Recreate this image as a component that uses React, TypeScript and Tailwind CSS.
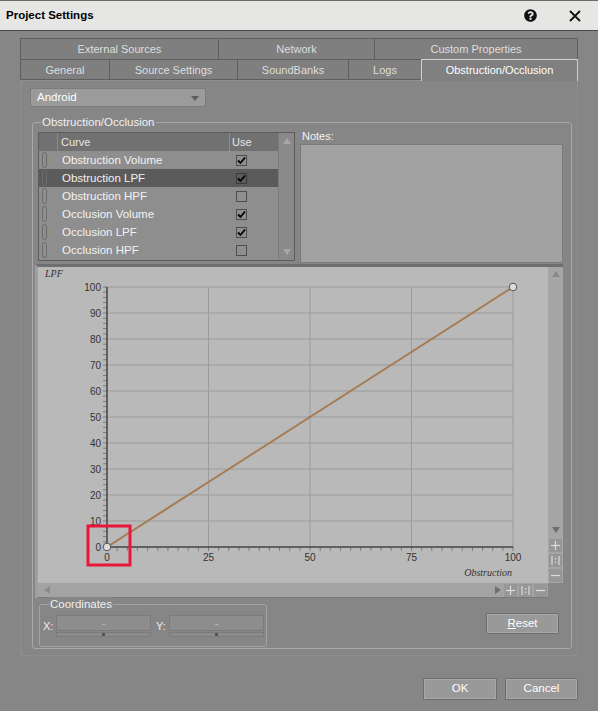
import clsx from "clsx";
import { FaQuestionCircle } from "react-icons/fa";

const tabsTop = [
  { label: "External Sources", w: "w-[198px]" },
  { label: "Network", w: "w-[156px]" },
  { label: "Custom Properties", w: "w-[204px]", last: true },
];

const tabsBottom = [
  { label: "General", w: "w-[89px]" },
  { label: "Source Settings", w: "w-[128px]" },
  { label: "SoundBanks", w: "w-[111px]" },
  { label: "Logs", w: "w-[73px]" },
  { label: "Obstruction/Occlusion", w: "w-[157px]", active: true, last: true },
];

const curves = [
  { name: "Obstruction Volume", use: true },
  { name: "Obstruction LPF", use: true, selected: true },
  { name: "Obstruction HPF", use: false },
  { name: "Occlusion Volume", use: true },
  { name: "Occlusion LPF", use: true },
  { name: "Occlusion HPF", use: false },
];

function Tri({ dir, className }: { dir: "up" | "down" | "left" | "right"; className?: string }) {
  const pts = {
    up: "0,7 4,1 8,7",
    down: "0,1 8,1 4,7",
    left: "7,0 7,8 1,4",
    right: "1,0 1,8 7,4",
  }[dir];
  return (
    <svg width="8" height="8" viewBox="0 0 8 8" className={className}>
      <polygon points={pts} fill="currentColor" />
    </svg>
  );
}

function MiniButton({ kind }: { kind: "plus" | "fit" | "minus" }) {
  return (
    <div className="w-[13px] h-[13px] bg-[#979797] flex items-center justify-center text-[#dcdcdc]">
      <svg width="9" height="9" viewBox="0 0 9 9" stroke="currentColor" strokeWidth="1.2">
        {kind === "plus" && (
          <>
            <line x1="0" y1="4.5" x2="9" y2="4.5" />
            <line x1="4.5" y1="0" x2="4.5" y2="9" />
          </>
        )}
        {kind === "minus" && <line x1="0" y1="4.5" x2="9" y2="4.5" />}
        {kind === "fit" && (
          <>
            <line x1="1" y1="0" x2="1" y2="9" />
            <line x1="8" y1="0" x2="8" y2="9" />
            <line x1="4.5" y1="2" x2="4.5" y2="3.5" />
            <line x1="4.5" y1="5.5" x2="4.5" y2="7" />
          </>
        )}
      </svg>
    </div>
  );
}

function CheckBox({ checked, dark }: { checked: boolean; dark?: boolean }) {
  return (
    <div
      className={clsx(
        "w-[11px] h-[11px] border flex items-center justify-center",
        dark ? "bg-[#5c5c5c] border-[#3a3a3a]" : "bg-[#8f8f8f] border-[#4e4e4e]"
      )}
    >
      {checked && (
        <svg width="9" height="9" viewBox="0 0 9 9">
          <path d="M1 4.5 L3.5 7 L8 1.5" fill="none" stroke="#000" strokeWidth="1.8" />
        </svg>
      )}
    </div>
  );
}

function DlgButton({ w, h, children }: { w: string; h: string; children: React.ReactNode }) {
  return (
    <div
      className={clsx(
        w,
        h,
        "bg-[#999999] border border-[#6c6c6c] shadow-[inset_0_0_0_1px_#a8a8a8] rounded-[1px] flex items-center justify-center text-white text-[11.5px]"
      )}
    >
      {children}
    </div>
  );
}

function TitleBar() {
  return (
    <div className="h-[31px] shrink-0 bg-[#e6e6e4] border-t border-t-[#6b6b6b] border-b border-b-[#4a4a4a] flex items-center pl-[6px] pr-[17px]">
      <span className="font-bold text-[11.5px] text-black">Project Settings</span>
      <div className="ml-auto flex items-center gap-[32px]">
        <FaQuestionCircle size={13} color="#111" />
        <svg width="12" height="12" viewBox="0 0 12 12">
          <path d="M1 1 L11 11 M11 1 L1 11" stroke="#111" strokeWidth="1.8" />
        </svg>
      </div>
    </div>
  );
}

function Tabs() {
  return (
    <div className="flex flex-col">
      <div className="flex">
        {tabsTop.map((t) => (
          <div
            key={t.label}
            className={clsx(
              t.w,
              "h-[21px] pt-px flex items-center justify-center bg-[#7f7f7f] text-[#dedede] border-t border-l border-[#5e5e5e]",
              t.last && "border-r"
            )}
          >
            {t.label}
          </div>
        ))}
      </div>
      <div className="flex items-start">
        {tabsBottom.map((t) =>
          t.active ? (
            <div
              key={t.label}
              className={clsx(
                t.w,
                "h-[22px] -mb-px relative z-10 flex items-center justify-center bg-[#808080] text-white border-t border-l border-r border-[#d0d0d0]"
              )}
            >
              {t.label}
            </div>
          ) : (
            <div
              key={t.label}
              className={clsx(
                t.w,
                "h-[21px] pt-px flex items-center justify-center bg-[#7f7f7f] text-[#dedede] border-t border-l border-b border-[#5e5e5e]"
              )}
            >
              {t.label}
            </div>
          )
        )}
      </div>
    </div>
  );
}

function CurveList() {
  return (
    <div className="w-[257px] h-[129px] border border-[#5d5d5d] flex bg-[#8e8e8e]">
      <div className="flex-1 flex flex-col">
        <div className="h-[18px] bg-[#717171] flex text-[#e6e6e6]">
          <div className="w-[19px] border-r border-[#8c8c8c]" />
          <div className="flex-1 pl-[3px] flex items-center border-r border-[#8c8c8c]">Curve</div>
          <div className="w-[48px] pl-[2px] flex items-center">Use</div>
        </div>
        {curves.map((c) => (
          <div key={c.name} className={clsx("h-[18px] flex items-center", c.selected && "bg-[#5b5b5b]")}>
            <div className="w-[19px] h-full flex items-center pl-[3px]">
              <div className="w-[5px] h-[16px] rounded-full border border-[#6c6c6c]" />
            </div>
            <div className="flex-1 pl-[4px] pt-px text-[#f2f2f2] text-[11.5px]">{c.name}</div>
            <div className="w-[48px] pl-[6px]">
              <CheckBox checked={c.use} dark={c.selected} />
            </div>
          </div>
        ))}
      </div>
      <div className="w-[16px] bg-[#8a8a8a] border-l border-[#7c7c7c] flex flex-col items-center justify-between py-[4px] text-[#a6a6a6]">
        <Tri dir="up" />
        <Tri dir="down" />
      </div>
    </div>
  );
}

function Plot() {
  const ox = 69;
  const oy = 280;
  const sx = 4.06;
  const sy = 2.6;
  const ys = Array.from({ length: 11 }, (_, i) => i * 10);
  const xs = [0, 25, 50, 75, 100];
  const yTicks = Array.from({ length: 51 }, (_, i) => i * 2);
  const xTicks = Array.from({ length: 41 }, (_, i) => i * 2.5);
  return (
    <svg width="510" height="316" viewBox="0 0 510 316" className="block">
      <rect width="510" height="316" fill="#b9b9b9" />
      <text x="7" y="10" fontSize="10" fontStyle="italic" fill="#333" fontFamily="Liberation Serif">
        LPF
      </text>
      {ys.slice(1).map((v) => (
        <line key={"h" + v} x1={ox} x2={ox + 100 * sx} y1={oy - v * sy} y2={oy - v * sy} stroke="#9b9b9b" />
      ))}
      {xs.slice(1).map((v) => (
        <line key={"v" + v} x1={ox + v * sx} x2={ox + v * sx} y1={oy - 100 * sy} y2={oy} stroke="#9b9b9b" />
      ))}
      {yTicks.map((v) => (
        <line key={"yt" + v} x1={ox - 4} x2={ox} y1={oy - v * sy} y2={oy - v * sy} stroke="#7a7a7a" />
      ))}
      {xTicks.map((v) => (
        <line key={"xt" + v} x1={ox + v * sx} x2={ox + v * sx} y1={oy} y2={oy + 4} stroke="#7a7a7a" />
      ))}
      {ys.map((v) => (
        <text key={"yl" + v} x={ox - 6} y={oy - v * sy + 3.5} fontSize="10" textAnchor="end" fill="#333">
          {v}
        </text>
      ))}
      {xs.map((v) => (
        <text key={"xl" + v} x={ox + v * sx} y={oy + 14} fontSize="10" textAnchor="middle" fill="#333">
          {v}
        </text>
      ))}
      <line x1={ox} x2={ox} y1={oy - 100 * sy} y2={oy} stroke="#454545" strokeWidth="1.5" />
      <line x1={ox} x2={ox + 100 * sx} y1={oy} y2={oy} stroke="#454545" strokeWidth="1.5" />
      <line x1={ox} y1={oy} x2={ox + 100 * sx} y2={oy - 100 * sy} stroke="#a67b52" strokeWidth="2" />
      <circle cx={ox} cy={oy} r="3.8" fill="#dcdcdc" stroke="#555" />
      <circle cx={ox + 100 * sx} cy={oy - 100 * sy} r="3.8" fill="#dcdcdc" stroke="#555" />
      <text x="474" y="309" fontSize="10" fontStyle="italic" textAnchor="end" fill="#333" fontFamily="Liberation Serif">
        Obstruction
      </text>
      <rect x="50" y="259" width="42" height="39" fill="none" stroke="#e8173a" strokeWidth="3" />
    </svg>
  );
}

function Graph() {
  return (
    <div className="mt-[1px] -ml-[3px] w-[528px] border-t-[3px] border-t-[#6f6f6f] border-l-[3px] border-l-[#9f9f9f] grid grid-cols-[510px_15px] grid-rows-[316px_15px]">
      <Plot />
      <div className="bg-[#a6a6a6] flex flex-col items-center pt-[3px] pb-[1px] text-[#888]">
        <Tri dir="up" />
        <div className="flex-1" />
        <Tri dir="down" className="text-[#6e6e6e]" />
        <div className="mt-[5px] flex flex-col gap-[2px]">
          <MiniButton kind="plus" />
          <MiniButton kind="fit" />
          <MiniButton kind="minus" />
        </div>
      </div>
      <div className="bg-[#a3a3a3] border-b border-[#7a7a7a] flex items-center pl-[5px] pr-[1px] text-[#8a8a8a]">
        <Tri dir="left" />
        <div className="flex-1" />
        <Tri dir="right" className="text-[#6e6e6e] mr-[2px]" />
        <div className="flex gap-[2px]">
          <MiniButton kind="plus" />
          <MiniButton kind="fit" />
          <MiniButton kind="minus" />
        </div>
      </div>
      <div />
    </div>
  );
}

function CoordInput({ label }: { label: string }) {
  return (
    <div className="flex items-start">
      <span className="w-[13px] mt-[3px] text-[#eeeeee]">{label}</span>
      <div className="flex flex-col w-[95px]">
        <div className="h-[16px] bg-[#8d8d8d] border border-[#7b7b7b] flex items-center justify-center text-[#bdbdbd] leading-none">
          -
        </div>
        <div className="mt-[1px] h-[5px] bg-[#8b8b8b] border border-[#7b7b7b] flex justify-center">
          <div className="w-[3px] h-full bg-[#555]" />
        </div>
      </div>
    </div>
  );
}

function Panel() {
  return (
    <div className="h-[576px] border border-[#8f8f8f] pt-[7px] pl-[9px]">
      <div className="w-[176px] h-[19px] bg-[#9b9b9b] border border-[#7c7c7c] flex items-center pl-[6px] pr-[6px] pt-px text-white text-[11.5px]">
        Android
        <svg width="8" height="5" viewBox="0 0 8 5" className="ml-auto">
          <polygon points="0,0 8,0 4,5" fill="#5e5e5e" />
        </svg>
      </div>

      <div className="mt-[15px] ml-[2px] w-[540px] h-[527px] relative border border-[#a9a9a9] rounded-[3px] pt-[9px] pl-[5px] pr-[8px]">
        <span className="absolute -top-[8px] left-[8px] px-[1px] bg-[#868686] text-[#f0f0f0] text-[11.5px] leading-[14px]">
          Obstruction/Occlusion
        </span>

        <div className="flex gap-[5px] h-[131px]">
          <CurveList />
          <div className="w-[263px] flex flex-col">
            <span className="h-[12px] -mt-[2px] pl-[2px] leading-[12px] text-[#f2f2f2]">Notes:</span>
            <div className="mt-[2px] h-[119px] bg-[#a2a2a2] border border-[#7b7b7b]" />
          </div>
        </div>

        <Graph />

        <div className="mt-[6px] flex items-start">
          <div className="ml-[1px] w-[228px] h-[43px] relative border border-[#a3a3a3] rounded-[3px] pt-[10px] pl-[3px] flex gap-[5px]">
            <span className="absolute -top-[8px] left-[9px] px-[1px] bg-[#868686] text-[#f0f0f0] text-[11.5px] leading-[14px]">
              Coordinates
            </span>
            <CoordInput label="X:" />
            <CoordInput label="Y:" />
          </div>
          <div className="ml-auto mr-[4px] mt-[9px]">
            <DlgButton w="w-[73px]" h="h-[21px]">
              <span>
                <span className="underline">R</span>eset
              </span>
            </DlgButton>
          </div>
        </div>
      </div>
    </div>
  );
}

export default function App() {
  return (
    <div className="w-[598px] h-[711px] bg-[#868686] flex flex-col text-[11px] text-[#ededed] [font-family:'Liberation_Sans',Arial,sans-serif] overflow-hidden">
      <TitleBar />
      <div className="mt-[7px] mx-[20px] flex flex-col">
        <Tabs />
        <Panel />
      </div>
      <div className="mt-[22px] mr-[20px] flex justify-end gap-[8px]">
        <DlgButton w="w-[74px]" h="h-[22px]">OK</DlgButton>
        <DlgButton w="w-[73px]" h="h-[22px]">Cancel</DlgButton>
      </div>
    </div>
  );
}
